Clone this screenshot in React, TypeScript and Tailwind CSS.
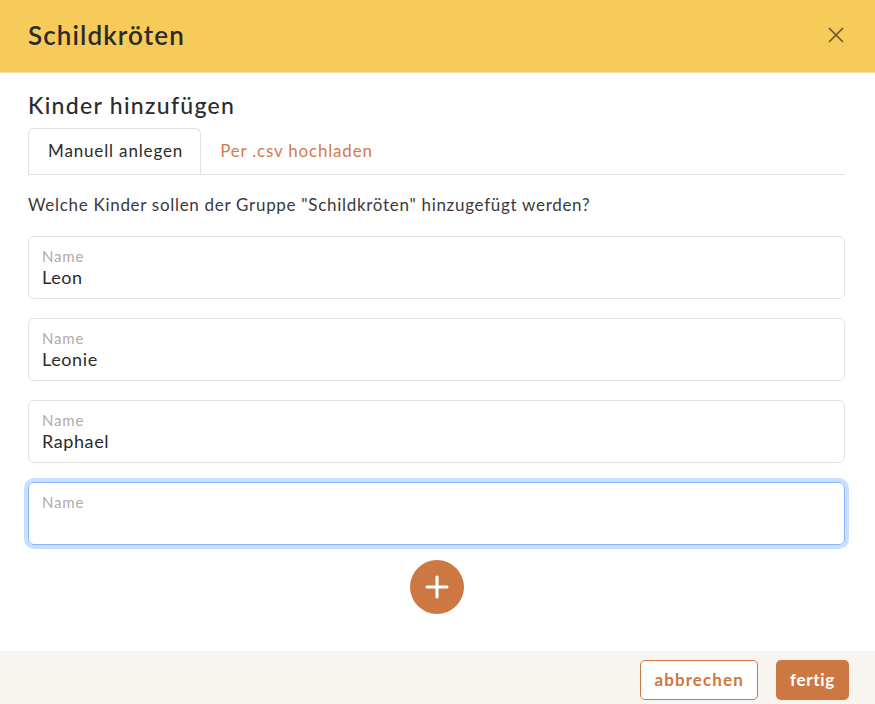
import { X, Plus } from "lucide-react"

const kinder = ["Leon", "Leonie", "Raphael", ""]

export default function App() {
  return (
    <div className="w-[875px] h-[704px] bg-white flex flex-col font-['Lato','Open_Sans',sans-serif] text-[#212529] overflow-hidden">
      {/* Header */}
      <div className="h-[73px] shrink-0 bg-[#f7cb5a] border-b border-[#f3dc9c] flex items-center justify-between pl-7 pr-[21px]">
        <h1 className="text-[26px] font-semibold text-[#2b2b2b] tracking-[1.1px] -mt-[2px]">Schildkröten</h1>
        <button className="text-[#6b5a27] p-1 -mt-[2px] mr-[1px]">
          <X size={26} strokeWidth={1.6} />
        </button>
      </div>

      {/* Body */}
      <div className="flex-1 pl-7 pr-[30px] pt-[18px]">
        <h2 className="text-[23px] font-medium text-[#2b2b2b] leading-[28px] tracking-[1.3px]">Kinder hinzufügen</h2>

        <div className="flex mt-[9px] border-b border-[#dee2e6]">
          <div className="h-[46px] pl-[19px] pr-[17px] flex items-center border border-[#dee2e6] border-b-white rounded-t-[6px] -mb-px bg-white text-[17px] tracking-[0.85px] text-[#2b2b2b]">
            Manuell anlegen
          </div>
          <div className="h-[46px] px-[19px] flex items-center text-[17px] tracking-[0.8px] text-[#d4794a]">Per .csv hochladen</div>
        </div>

        <p className="mt-[18px] text-[17px] text-[#3a3a3a] leading-[24px] tracking-[0.7px]">
          Welche Kinder sollen der Gruppe "Schildkröten" hinzugefügt werden?
        </p>

        <div className="mt-[19px] flex flex-col gap-[19px]">
          {kinder.map((name, i) => {
            const focused = i === kinder.length - 1
            return (
              <div
                key={i}
                className={
                  focused
                    ? "h-[63px] rounded-[6px] border border-[#86b7fe] shadow-[0_0_0_4px_rgba(13,110,253,0.22)] px-[13px] pt-[10px]"
                    : "h-[63px] rounded-[6px] border border-[#e2e2e2] px-[13px] pt-[10px]"
                }
              >
                <div className="text-[15px] leading-[18px] tracking-[0.8px] text-[#b3aaa6]">Name</div>
                <div className="text-[18px] leading-[24px] tracking-[0.6px] text-[#2b2b2b]">{name}</div>
              </div>
            )
          })}
        </div>

        <div className="flex justify-center mt-[15px]">
          <button className="w-[54px] h-[54px] rounded-full bg-[#cd7842] flex items-center justify-center text-white">
            <Plus size={34} strokeWidth={2.2} />
          </button>
        </div>
      </div>

      {/* Footer */}
      <div className="h-[53px] shrink-0 bg-[#f8f5f0] flex items-start justify-end gap-[18px] pt-[9px] pr-[26px]">
        <button className="h-[40px] px-[13px] rounded-[5px] border border-[#cd7842] bg-white text-[#cd7842] text-[17px] font-bold tracking-[1.1px]">
          abbrechen
        </button>
        <button className="h-[40px] px-[14px] rounded-[5px] bg-[#cd7842] text-white text-[17px] font-bold tracking-[0.7px]">
          fertig
        </button>
      </div>
    </div>
  )
}
